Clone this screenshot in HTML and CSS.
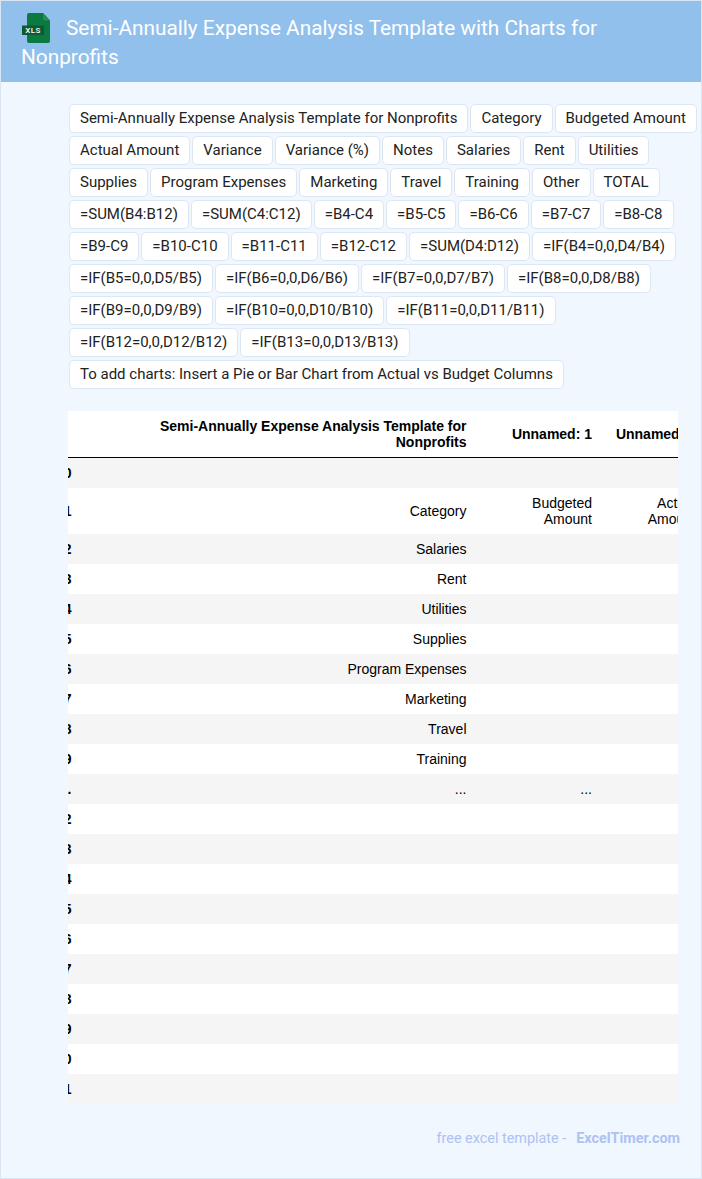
FILE: index.html
```html
<!DOCTYPE html>
<html lang="en">
<head>
<meta charset="utf-8">
<title>Semi-Annually Expense Analysis Template with Charts for Nonprofits</title>
<link rel="stylesheet" href="styles.css">
</head>
<body>
<div class="page">
  <header class="hero">
    <h1 class="title"><svg class="xls-icon" viewBox="0 0 30 30" width="30" height="30" aria-hidden="true"><path class="xls-body" d="M8 0H22L29 7.5V28a2 2 0 0 1-2 2H8a2 2 0 0 1-2-2V2a2 2 0 0 1 2-2Z"/><path class="xls-fold" d="M22 0L29 7.5H24a2 2 0 0 1-2-2Z"/><rect class="xls-band" x="1" y="12.5" width="22" height="9.5"/><text class="xls-text" x="12" y="20.2">XLS</text></svg>Semi-Annually Expense Analysis Template with Charts for Nonprofits</h1>
  </header>
  <main class="content">
    <ul class="tags">
      <li class="tag">Semi-Annually Expense Analysis Template for Nonprofits</li>
      <li class="tag">Category</li>
      <li class="tag">Budgeted Amount</li>
      <li class="tag">Actual Amount</li>
      <li class="tag">Variance</li>
      <li class="tag">Variance (%)</li>
      <li class="tag">Notes</li>
      <li class="tag">Salaries</li>
      <li class="tag">Rent</li>
      <li class="tag">Utilities</li>
      <li class="tag">Supplies</li>
      <li class="tag">Program Expenses</li>
      <li class="tag">Marketing</li>
      <li class="tag">Travel</li>
      <li class="tag">Training</li>
      <li class="tag">Other</li>
      <li class="tag">TOTAL</li>
      <li class="tag">=SUM(B4:B12)</li>
      <li class="tag">=SUM(C4:C12)</li>
      <li class="tag">=B4-C4</li>
      <li class="tag">=B5-C5</li>
      <li class="tag">=B6-C6</li>
      <li class="tag">=B7-C7</li>
      <li class="tag">=B8-C8</li>
      <li class="tag">=B9-C9</li>
      <li class="tag">=B10-C10</li>
      <li class="tag">=B11-C11</li>
      <li class="tag">=B12-C12</li>
      <li class="tag">=SUM(D4:D12)</li>
      <li class="tag">=IF(B4=0,0,D4/B4)</li>
      <li class="tag">=IF(B5=0,0,D5/B5)</li>
      <li class="tag">=IF(B6=0,0,D6/B6)</li>
      <li class="tag">=IF(B7=0,0,D7/B7)</li>
      <li class="tag">=IF(B8=0,0,D8/B8)</li>
      <li class="tag">=IF(B9=0,0,D9/B9)</li>
      <li class="tag">=IF(B10=0,0,D10/B10)</li>
      <li class="tag">=IF(B11=0,0,D11/B11)</li>
      <li class="tag">=IF(B12=0,0,D12/B12)</li>
      <li class="tag">=IF(B13=0,0,D13/B13)</li>
      <li class="tag">To add charts: Insert a Pie or Bar Chart from Actual vs Budget Columns</li>
    </ul>
    <div class="table-wrap">
      <table class="sheet">
        <colgroup><col class="col-index"><col class="col-a"><col class="col-b"><col class="col-c"></colgroup>
        <thead>
          <tr><th></th><th>Semi-Annually Expense Analysis Template for Nonprofits</th><th>Unnamed: 1</th><th>Unnamed: 2</th></tr>
        </thead>
        <tbody>
          <tr><th>0</th><td></td><td></td><td></td></tr>
          <tr><th>1</th><td>Category</td><td>Budgeted Amount</td><td>Actual Amount</td></tr>
          <tr><th>2</th><td>Salaries</td><td></td><td></td></tr>
          <tr><th>3</th><td>Rent</td><td></td><td></td></tr>
          <tr><th>4</th><td>Utilities</td><td></td><td></td></tr>
          <tr><th>5</th><td>Supplies</td><td></td><td></td></tr>
          <tr><th>6</th><td>Program Expenses</td><td></td><td></td></tr>
          <tr><th>7</th><td>Marketing</td><td></td><td></td></tr>
          <tr><th>8</th><td>Travel</td><td></td><td></td></tr>
          <tr><th>9</th><td>Training</td><td></td><td></td></tr>
          <tr><th>...</th><td>...</td><td>...</td><td></td></tr>
          <tr><th>12</th><td></td><td></td><td></td></tr>
          <tr><th>13</th><td></td><td></td><td></td></tr>
          <tr><th>14</th><td></td><td></td><td></td></tr>
          <tr><th>15</th><td></td><td></td><td></td></tr>
          <tr><th>16</th><td></td><td></td><td></td></tr>
          <tr><th>17</th><td></td><td></td><td></td></tr>
          <tr><th>18</th><td></td><td></td><td></td></tr>
          <tr><th>19</th><td></td><td></td><td></td></tr>
          <tr><th>20</th><td></td><td></td><td></td></tr>
          <tr><th>21</th><td></td><td></td><td></td></tr>
        </tbody>
      </table>
    </div>
  </main>
  <footer class="foot">free excel template -<a class="foot-link" href="#">ExcelTimer.com</a></footer>
</div>
</body>
</html>
```
FILE: styles.css
```css
* { box-sizing: border-box; }
html, body { margin: 0; padding: 0; }
body { background: #f0f7ff; font-family: Roboto, sans-serif; }
.page {
  width: 702px;
  height: 1179px;
  border: 1px solid #d9e5f2;
  background: #f0f7ff;
  overflow: hidden;
}
.hero {
  background: #92c0ec;
  padding: 12px 20px 10px;
}
.title {
  margin: 0;
  color: #fff;
  font: 400 20.8px/29px Roboto, sans-serif;
}
.xls-icon {
  display: inline-block;
  vertical-align: -8px;
  margin-right: 15px;
}
.xls-body { fill: #0b7a41; }
.xls-fold { fill: #2a8a58; }
.xls-band { fill: #0a5a32; }
.xls-text {
  fill: #fff;
  font: 500 8px Roboto, sans-serif;
  letter-spacing: 0.4px;
  text-anchor: middle;
}
.content { padding: 22px 0 0 67px; }
.tags {
  list-style: none;
  margin: 0;
  padding: 0 0 0 1px;
  display: flex;
  flex-wrap: wrap;
  gap: 3px 2px;
}
.tag {
  height: 29px;
  padding: 0 10px;
  border: 1px solid #dce7f4;
  border-radius: 5px;
  background: #fff;
  color: #222;
  font-size: 15px;
  line-height: 27px;
  white-space: nowrap;
}
.table-wrap {
  margin: 22px 23px 0 0;
  overflow: hidden;
}
.sheet {
  margin-left: -26px;
  table-layout: fixed;
  width: 664px;
  border-collapse: collapse;
  font: 14px/16px "Liberation Sans", Arial, sans-serif;
  color: #000;
  background: #fff;
}
.col-index { width: 40px; }
.col-a { width: 394.5px; }
.col-b { width: 125.5px; }
.col-c { width: 104px; }
.sheet th, .sheet td {
  padding: 7px 10px;
  text-align: right;
}
.sheet th { font-weight: 700; }
.sheet tbody th { padding-right: 10.5px; }
.sheet thead th { border-bottom: 1px solid #000; }
.sheet tbody tr:nth-child(odd) { background: #f5f5f5; }
.foot {
  padding: 27px 21px 0 0;
  display: flex;
  justify-content: flex-end;
  gap: 10px;
  color: #aec2f2;
  font-size: 14.4px;
  line-height: 16px;
}
.foot-link {
  color: #aec2f2;
  font-weight: 700;
  text-decoration: none;
}
```
